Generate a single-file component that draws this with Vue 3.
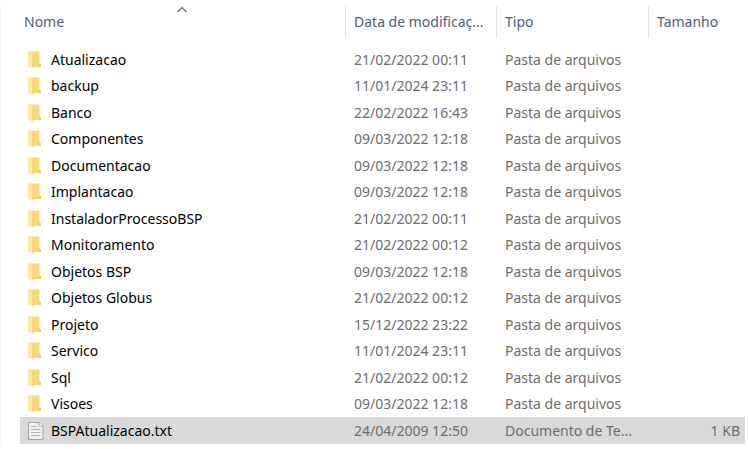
<template>
  <main class="file-list">
    <table>
      <colgroup>
        <col>
        <col class="col-date">
        <col class="col-type">
        <col class="col-size">
      </colgroup>
      <thead>
        <tr>
          <th v-for="column in columns" :key="column.key" scope="col">
            <button type="button" @click="sortBy(column.key)">{{ column.label }}</button>
            <svg
              v-if="column.key === sortKey"
              class="sort-arrow"
              :class="{ descending }"
              viewBox="0 0 12 8"
              aria-hidden="true"
            >
              <path d="M1.500 6 6 1.500 10.500 6" fill="none" stroke="#777" stroke-width="1.500" />
            </svg>
          </th>
        </tr>
      </thead>
      <tbody>
        <tr
          v-for="file in sortedFiles"
          :key="file.name"
          :class="{ selected: file.name === selected }"
          @click="selected = file.name"
        >
          <td>
            <div class="name">
              <svg v-if="file.size" class="icon" viewBox="0 0 16 20" aria-hidden="true">
                <path d="M.5 1.500h10.500l4 3.500v13.500H.5z" fill="#f0f0f0" stroke="#a3a3a3" />
                <path d="M11 1.500V5h4" fill="#fff" stroke="#a3a3a3" />
                <path d="M3 5.500h6M3 8.500h9.500M3 11.500h9.500M3 14.500h9.500" stroke="#b5b5b5" />
              </svg>
              <svg v-else class="icon" viewBox="0 0 16 20" aria-hidden="true">
                <path d="M1 1.500h10.500v12l1.500 1V17H1z" fill="#f8d978" />
                <path d="M10.500 13.500h1l1.500 1V17h-2.500z" fill="#f2cd68" />
                <path d="M0 1.500l4.500 1.500V18.500L0 16.500z" fill="#ffe7a8" />
                <path d="M4.500 3l1 .3V18l-1 .5z" fill="#f3cf6e" />
              </svg>
              <span>{{ file.name }}</span>
            </div>
          </td>
          <td>{{ file.date }}</td>
          <td>{{ file.type }}</td>
          <td class="size">{{ file.size }}</td>
        </tr>
      </tbody>
    </table>
  </main>
</template>

<script setup>
import { ref, computed } from 'vue'

const columns = [
  { key: 'name', label: 'Nome' },
  { key: 'date', label: 'Data de modificaç...' },
  { key: 'type', label: 'Tipo' },
  { key: 'size', label: 'Tamanho' }
]

const folders = [
  ['Atualizacao', '21/02/2022 00:11'],
  ['backup', '11/01/2024 23:11'],
  ['Banco', '22/02/2022 16:43'],
  ['Componentes', '09/03/2022 12:18'],
  ['Documentacao', '09/03/2022 12:18'],
  ['Implantacao', '09/03/2022 12:18'],
  ['InstaladorProcessoBSP', '21/02/2022 00:11'],
  ['Monitoramento', '21/02/2022 00:12'],
  ['Objetos BSP', '09/03/2022 12:18'],
  ['Objetos Globus', '21/02/2022 00:12'],
  ['Projeto', '15/12/2022 23:22'],
  ['Servico', '11/01/2024 23:11'],
  ['Sql', '21/02/2022 00:12'],
  ['Visoes', '09/03/2022 12:18']
]

const files = [
  ...folders.map(([name, date]) => ({ name, date, type: 'Pasta de arquivos', size: '' })),
  { name: 'BSPAtualizacao.txt', date: '24/04/2009 12:50', type: 'Documento de Te...', size: '1 KB' }
]

const selected = ref('BSPAtualizacao.txt')
const sortKey = ref('name')
const descending = ref(false)

// dd/mm/yyyy hh:mm -> yyyymmdd hh:mm
function sortValue(file) {
  if (sortKey.value !== 'date') return file[sortKey.value].toLowerCase()
  const [day, time] = file.date.split(' ')
  return day.split('/').reverse().join('') + time
}

// folders come before files, reversed when descending
const sortedFiles = computed(() => {
  const direction = descending.value ? -1 : 1
  return [...files].sort((a, b) => {
    if (!a.size !== !b.size) return (a.size ? 1 : -1) * direction
    return sortValue(a).localeCompare(sortValue(b)) * direction
  })
})

function sortBy(key) {
  descending.value = key === sortKey.value ? !descending.value : false
  sortKey.value = key
}
</script>

<style>
body {
  margin: 0;
  background: #fff;
}
</style>

<style scoped>
.file-list {
  margin-top: 6px;
  padding: 0 3px 0 19px;
  border-left: 1px solid #f5f5f5;
  font-family: "Segoe UI", "Noto Sans", sans-serif;
  font-size: 14px;
  color: #6d6d6d;
}

table {
  width: 100%;
  table-layout: fixed;
  border-collapse: separate;
  border-spacing: 0;
}

.col-date {
  width: 151px;
}

.col-type {
  width: 152px;
}

.col-size {
  width: 96px;
}

th {
  position: relative;
  height: 32px;
  padding: 0;
  text-align: left;
  border-right: 1px solid #e2e2e2;
}

th:last-child {
  border-right: 0;
}

th button {
  width: 100%;
  padding: 0 0 0 8px;
  border: 0;
  background: none;
  font: inherit;
  font-weight: 400;
  line-height: 32px;
  color: #4c607a;
  text-align: left;
  white-space: nowrap;
}

th:first-child button {
  padding-left: 4px;
}

.sort-arrow {
  position: absolute;
  top: 0;
  left: 50%;
  width: 12px;
  height: 8px;
  margin-left: -7px;
}

.sort-arrow.descending {
  transform: rotate(180deg);
}

td {
  height: 26px;
  padding: 0 0 0 8px;
  line-height: 26px;
  white-space: nowrap;
  overflow: hidden;
}

tbody tr:nth-child(odd) td {
  height: 27px;
}

tbody::before {
  content: "";
  display: block;
  height: 8px;
}

.name {
  display: flex;
  align-items: center;
  gap: 7px;
  color: #000;
}

.icon {
  flex: none;
  width: 16px;
  height: 20px;
}

.size {
  padding: 0 5px 0 0;
  text-align: right;
}

.selected td {
  background: #d9d9d9;
}
</style>
